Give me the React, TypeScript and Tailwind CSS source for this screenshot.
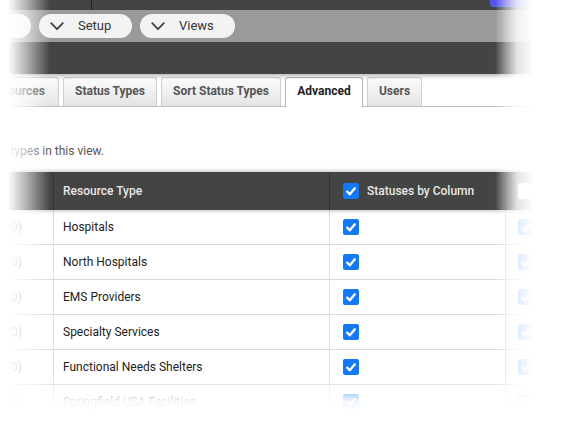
const ROWS = [
  'Hospitals',
  'North Hospitals',
  'EMS Providers',
  'Specialty Services',
  'Functional Needs Shelters',
  'Springfield USA Facilities',
]

function Box({ on = true }: { on?: boolean }) {
  if (!on) return <span className="block h-4 w-4 rounded-[2px] bg-white" />
  return (
    <span className="flex h-4 w-4 items-center justify-center rounded-[2px] bg-[#1479f5]">
      <svg viewBox="0 0 16 16" className="h-4 w-4">
        <path d="M4.2 8.6l2.6 2.7 5-6" fill="none" stroke="#fff" strokeWidth="2.3" strokeLinecap="round" strokeLinejoin="round" />
      </svg>
    </span>
  )
}

function Pill({ label, w }: { label: string; w: string }) {
  return (
    <div className={`flex h-[24px] items-center gap-[14px] rounded-full bg-[#f3f3f3] pl-[11px] text-[13px] text-[#333] ${w}`}>
      <svg viewBox="0 0 14 9" className="h-[9px] w-[14px]">
        <path d="M1.2 1.2L7 7.2l5.8-6" fill="none" stroke="#444" strokeWidth="1.8" strokeLinecap="round" strokeLinejoin="round" />
      </svg>
      <span>{label}</span>
    </div>
  )
}

function Tab({ label, w, active }: { label: string; w: string; active?: boolean }) {
  return (
    <div
      className={`flex items-center justify-center overflow-hidden whitespace-nowrap rounded-t-[3px] border border-b-0 pb-[3px] text-[12px] font-bold ${w} ${
        active
          ? 'relative -mb-px h-[30px] border-[#b5b5b5] bg-white text-[#222]'
          : 'h-[29px] border-[#cfcfcf] bg-gradient-to-b from-[#fbfbfb] to-[#e4e4e4] pb-[2px] text-[#555]'
      }`}
    >
      {label}
    </div>
  )
}

export default function App() {
  return (
    <div className="relative h-[437px] w-[575px] overflow-hidden bg-white font-['Roboto',sans-serif]">
      {/* top chrome */}
      <header className="relative z-10 shadow-[0_2px_4px_rgba(0,0,0,0.3)]">
        <div className="flex h-[10px] bg-[#444]">
          <div className="w-[92px] border-r border-[#222]" />
          <div className="flex-1" />
          <div className="mr-[25px] h-[7px] w-[60px] rounded-b-[4px] border border-t-0 border-[#3c6fe0] bg-[#5a4ee8]" />
        </div>
        <div className="flex h-[32px] items-center gap-[8px] bg-[#9a9a9a]">
          <div className="-ml-[50px] h-[24px] w-[81px] rounded-full bg-[#f3f3f3]" />
          <Pill label="Setup" w="w-[93px]" />
          <Pill label="Views" w="w-[95px]" />
        </div>
        <div className="h-[32px] bg-[#444]" />
      </header>

      {/* tabs */}
      <div className="flex items-end gap-[4px] border-b border-[#bdbdbd] pt-[3px]">
        <div className="-ml-[26px] flex w-[85px] justify-end">
          <Tab label="Resources" w="w-[85px]" />
        </div>
        <Tab label="Status Types" w="w-[94px]" />
        <Tab label="Sort Status Types" w="w-[120px]" />
        <Tab label="Advanced" w="w-[78px]" active />
        <Tab label="Users" w="w-[55px]" />
      </div>

      {/* description */}
      <div className="mt-[36px] flex w-[104px] justify-end">
        <span className="whitespace-nowrap text-[12px] leading-[16px] text-[#555]">
          Select how statuses are displayed for resource types in this view.
        </span>
      </div>

      {/* table */}
      <div className="mt-[13px] text-[12px]">
        <div className="relative z-10 flex h-[38px] bg-[#444] font-medium text-[#e8e8e8] shadow-[0_0_5px_rgba(0,0,0,0.35)]">
          <div className="w-[54px] border-r border-[#333]" />
          <div className="flex w-[276px] items-center border-r border-[#333] pl-[9px]">Resource Type</div>
          <div className="flex w-[176px] items-center gap-[8px] border-r border-[#333] pl-[13px]">
            <Box />
            <span>Statuses by Column</span>
          </div>
          <div className="flex flex-1 items-center pl-[12px]">
            <Box on={false} />
          </div>
        </div>
        {ROWS.map(r => (
          <div key={r} className="flex h-[35px] border-b border-[#d9d9d9] text-[#222]">
            <div className="flex w-[54px] items-center justify-end border-r border-[#dedede] pr-[31px]">
              <span className="whitespace-nowrap text-[#888]">(0)</span>
            </div>
            <div className="flex w-[276px] items-center border-r border-[#dedede] pl-[9px]">{r}</div>
            <div className="flex w-[176px] items-center border-r border-[#dedede] pl-[13px]">
              <Box />
            </div>
            <div className="flex flex-1 items-center pl-[12px]">
              <Box />
            </div>
          </div>
        ))}
      </div>

      {/* edge fades */}
      <div className="pointer-events-none absolute inset-y-0 left-0 z-20 w-[50px] bg-[linear-gradient(to_right,#fff_0px,#fff_8px,rgba(255,255,255,0.55)_28px,rgba(255,255,255,0)_50px)]" />
      <div className="pointer-events-none absolute inset-y-0 right-0 z-20 w-[80px] bg-[linear-gradient(to_right,rgba(255,255,255,0)_0px,rgba(255,255,255,0.5)_12px,rgba(255,255,255,0.85)_22px,#fff_38px)]" />
      <div className="pointer-events-none absolute inset-x-0 bottom-0 z-20 h-[60px] bg-[linear-gradient(to_bottom,rgba(255,255,255,0)_0px,rgba(255,255,255,0.35)_8px,rgba(255,255,255,0.93)_24px,#fff_34px)]" />
    </div>
  )
}
